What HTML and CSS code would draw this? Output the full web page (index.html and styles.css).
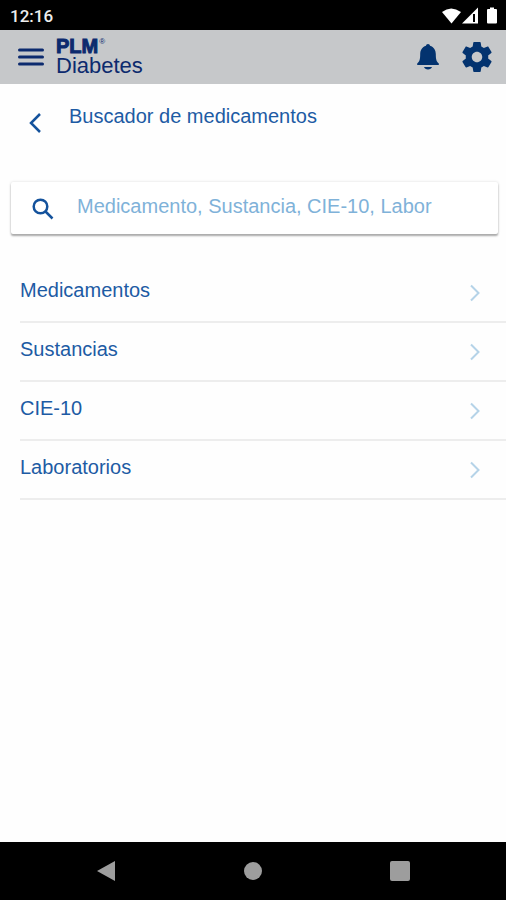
FILE: index.html
```html
<!DOCTYPE html>
<html lang="es">
<head>
<meta charset="utf-8">
<meta name="viewport" content="width=device-width, initial-scale=1">
<title>PLM Diabetes</title>
<link rel="stylesheet" href="styles.css">
</head>
<body>
<div class="status">
  <span class="clock">12:16</span>
  <svg class="signals" width="56" height="20" viewBox="0 0 56 20" aria-hidden="true">
    <path d="M0 6Q9 -1 19 6L9.500 17.500Z"/>
    <path d="M20 17.500L36 1.500V17.500Z"/>
    <path class="cutout" d="M31 8h2v8h-2z"/>
    <path d="M46 3h2V1.500h4V3h2q1 0 1 1v12.500q0 1-1 1h-8q-1 0-1-1V4q0-1 1-1z"/>
  </svg>
</div>
<header class="appbar">
  <button class="icon-button" type="button" aria-label="Menú">
    <svg width="26" height="18" viewBox="0 0 26 18"><path class="line navy" d="M1.500 2h23M1.500 9h23M1.500 16h23"/></svg>
  </button>
  <div class="brand">
    <div class="brand-top"><strong>PLM</strong><span class="mark">®</span></div>
    <div class="brand-name">Diabetes</div>
  </div>
  <button class="icon-button" type="button" aria-label="Notificaciones">
    <svg width="24" height="28" viewBox="0 0 24 28"><path class="fill-navy" d="M12 1c1.200 0 1.800.7 2 1.800C18 4 19.800 7.500 19.800 11c0 6 .8 7.500 3 9.500V22H1.200v-1.500C3.400 18.500 4.200 17 4.200 11 4.200 7.500 6 4 10 2.800 10.200 1.700 10.800 1 12 1zM8 24h8c-.5 1.600-2 2.500-4 2.500S8.500 25.600 8 24z"/></svg>
  </button>
  <button class="icon-button" type="button" aria-label="Configuración">
    <svg width="36" height="36" viewBox="0 0 24 24"><path class="fill-navy" d="M19.430 12.980c.04-.32.07-.64.07-.98s-.03-.66-.07-.98l2.110-1.650c.19-.15.24-.42.12-.64l-2-3.460c-.12-.22-.39-.3-.61-.22l-2.490 1c-.52-.4-1.080-.73-1.690-.98l-.38-2.650C14.460 2.180 14.250 2 14 2h-4c-.25 0-.46.18-.49.42l-.38 2.650c-.61.25-1.170.59-1.690.98l-2.490-1c-.23-.09-.49 0-.61.22l-2 3.460c-.13.22-.07.49.12.64l2.110 1.650c-.04.32-.07.65-.07.98s.03.66.07.98l-2.110 1.650c-.19.15-.24.42-.12.64l2 3.460c.12.22.39.3.61.22l2.490-1c.52.4 1.080.73 1.690.98l.38 2.650c.03.24.24.42.49.42h4c.25 0 .46-.18.49-.42l.38-2.650c.61-.25 1.170-.59 1.690-.98l2.490 1c.23.09.49 0 .61-.22l2-3.460c.12-.22.07-.49-.12-.64l-2.110-1.650zM12 15.500c-1.930 0-3.500-1.570-3.500-3.500s1.570-3.500 3.500-3.500 3.500 1.570 3.500 3.500-1.570 3.500-3.500 3.500z"/></svg>
  </button>
</header>
<main class="content">
  <div class="title-row">
    <button class="icon-button back" type="button" aria-label="Regresar">
      <svg width="14" height="22" viewBox="0 0 14 22"><path class="line blue" d="M13 2L4 11l9 9"/></svg>
    </button>
    <h1>Buscador de medicamentos</h1>
  </div>
  <label class="search">
    <svg width="24" height="24" viewBox="0 0 24 24" aria-hidden="true"><path class="line blue" d="M14.500 15.500l7 7"/><circle class="line blue" cx="9.500" cy="10.500" r="6.800"/></svg>
    <input type="text" aria-label="Buscar" placeholder="Medicamento, Sustancia, CIE-10, Labor">
  </label>
  <nav class="list">
    <a href="#medicamentos">Medicamentos<svg width="12" height="18" viewBox="0 0 12 18"><path class="line pale" d="M2 1.500L9.500 9 2 16.500"/></svg></a>
    <a href="#sustancias">Sustancias<svg width="12" height="18" viewBox="0 0 12 18"><path class="line pale" d="M2 1.500L9.500 9 2 16.500"/></svg></a>
    <a href="#cie-10">CIE-10<svg width="12" height="18" viewBox="0 0 12 18"><path class="line pale" d="M2 1.500L9.500 9 2 16.500"/></svg></a>
    <a href="#laboratorios">Laboratorios<svg width="12" height="18" viewBox="0 0 12 18"><path class="line pale" d="M2 1.500L9.500 9 2 16.500"/></svg></a>
  </nav>
</main>
<footer class="system">
  <button class="icon-button" type="button" aria-label="Atrás"><svg width="20" height="22" viewBox="0 0 20 22"><path d="M19 1v20L1 11z"/></svg></button>
  <button class="icon-button" type="button" aria-label="Inicio"><svg width="20" height="20" viewBox="0 0 20 20"><circle cx="10" cy="10" r="9"/></svg></button>
  <button class="icon-button" type="button" aria-label="Recientes"><svg width="20" height="20" viewBox="0 0 20 20"><rect width="20" height="20" rx="2"/></svg></button>
</footer>
</body>
</html>
```
FILE: styles.css
```css
* { box-sizing: border-box; }

body {
  margin: 0;
  min-height: 100vh;
  display: flex;
  flex-direction: column;
  background: #fefefe;
  color: #1d5ba4;
  font: 20px/24px "Liberation Sans", Arial, sans-serif;
}

svg { display: block; flex: none; }

.icon-button {
  display: flex;
  padding: 0;
  border: 0;
  background: none;
}

.line { fill: none; stroke-width: 2.5; }
.navy { stroke: #0c2a6e; stroke-width: 3; stroke-linecap: round; }
.blue { stroke: #14529c; }
.pale { stroke: #b5d3e8; stroke-width: 2; }
.fill-navy { fill: #03336f; }

.status {
  display: flex;
  align-items: center;
  justify-content: space-between;
  height: 30px;
  padding: 2px 8px 0 10px;
  background: #000;
  color: #eee;
  font: 500 17px/28px Roboto, sans-serif;
}

.signals { fill: #fff; }
.cutout { fill: #000; }

.appbar {
  display: flex;
  align-items: center;
  height: 54px;
  padding: 0 11px 0 18px;
  background: #c6c8ca;
}

.brand {
  flex: 1;
  padding-left: 12px;
  color: #0c2a6e;
}

.brand-top {
  display: flex;
  height: 18px;
  line-height: 18px;
}

.brand-top strong { -webkit-text-stroke: 1px #0c2a6e; }

.mark {
  padding: 1px 0 0 1px;
  font-size: 8px;
  line-height: 8px;
}

.brand-name {
  font-size: 22px;
  line-height: 22px;
}

.appbar .icon-button + .icon-button { margin-left: 19px; }

.content { flex: 1; }

.title-row {
  display: flex;
  padding: 20px 10px 0 27px;
}

.back { padding-top: 8px; }

h1 {
  margin: 0 0 0 28px;
  font-size: 20px;
  font-weight: 400;
}

.search {
  display: flex;
  align-items: center;
  height: 52px;
  margin: 48px 8px 28px 11px;
  padding-left: 20px;
  border-radius: 2px;
  background: #fff;
  box-shadow: 0 2px 2px #aaa, 0 0 3px #ddd;
}

.search input {
  flex: 1;
  min-width: 0;
  margin: 0;
  padding: 0 10px 4px 22px;
  border: 0;
  background: none;
  color: #1d5ba4;
  font: inherit;
}

.search input::placeholder { color: #7fb2d9; opacity: 1; }

.list { padding-left: 20px; }

.list a {
  display: flex;
  justify-content: space-between;
  height: 59px;
  padding: 16px 25px 0 0;
  border-bottom: 2px solid #ededed;
  color: inherit;
  text-decoration: none;
}

.list a:first-child { height: 61px; }

.list svg { margin-top: 6px; }

.list a + a { padding-top: 14px; }

.system {
  display: flex;
  align-items: center;
  justify-content: space-between;
  height: 58px;
  padding: 0 19%;
  background: #000;
}

.system svg { fill: #9d9d9d; }
```
